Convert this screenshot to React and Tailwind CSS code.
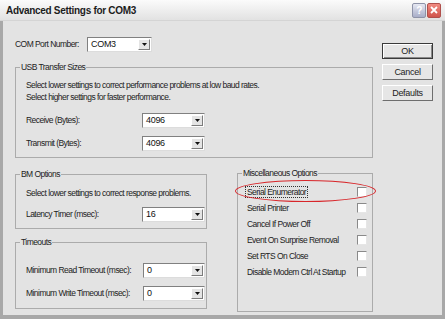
import React from "react";

const Combo = ({ value, className = "" }) => (
  <div
    className={
      "h-[15px] flex items-center justify-between bg-white border border-t-[#808080] border-l-[#808080] border-b-[#dcdcdc] border-r-[#dcdcdc] pl-[3px] pr-[1px] " +
      className
    }
  >
    <span className="text-[9px] leading-none tracking-[-0.3px] text-[#111]">{value}</span>
    <span className="w-[12px] h-[11px] flex items-center justify-center bg-[#e4e4e4] border border-t-white border-l-white border-b-[#7c7c7c] border-r-[#7c7c7c]">
      <svg width="5" height="3" viewBox="0 0 5 3">
        <path d="M0 0H5L2.5 3Z" fill="#111" />
      </svg>
    </span>
  </div>
);

const Group = ({ title, className = "", children }) => (
  <div className={"relative border border-[#ababab] " + className}>
    <span className="absolute left-[4px] -top-[7px] px-[1px] bg-[#e3e3e3] whitespace-nowrap leading-[12px] text-[#222]">
      {title}
    </span>
    {children}
  </div>
);

const Check = () => (
  <span className="w-[10px] h-[10px] bg-white border border-t-[#8a8a8a] border-l-[#8a8a8a] border-b-[#e6e6e6] border-r-[#e6e6e6]" />
);

const Button = ({ label, primary }) => (
  <button
    type="button"
    className={
      "w-[51px] h-[16px] flex items-center justify-center bg-[#e6e6e6] text-[9px] tracking-[-0.3px] leading-none text-[#222] " +
      (primary
        ? "border border-[#3a3a3a] shadow-[inset_1px_1px_0_#fff,inset_-1px_-1px_0_#8a8a8a]"
        : "border border-t-white border-l-white border-b-[#6e6e6e] border-r-[#6e6e6e]")
    }
  >
    {label}
  </button>
);

const Row = ({ label, value, labelW = "w-[116px]", comboW = "w-[63px]" }) => (
  <div className="flex items-center">
    <span className={labelW + " whitespace-nowrap"}>{label}</span>
    <Combo value={value} className={comboW} />
  </div>
);

const misc = [
  "Serial Enumerator",
  "Serial Printer",
  "Cancel If Power Off",
  "Event On Surprise Removal",
  "Set RTS On Close",
  "Disable Modem Ctrl At Startup",
];

export default function App() {
  return (
    <div className="w-[445px] h-[319px] flex flex-col bg-[#e3e3e3] overflow-hidden font-['Liberation_Sans',sans-serif] text-[8.5px] tracking-[-0.55px] text-[#222]">
      {/* title bar */}
      <div className="h-[21px] flex items-center justify-between pl-[6px] pr-[4px] bg-gradient-to-b from-[#fbfbfb] to-[#e2e2e2] border-b border-[#d4d4d4]">
        <span className="font-bold text-[10px] tracking-[-0.3px] text-[#1c1c1c]">
          Advanced Settings for COM3
        </span>
        <div className="flex gap-[1px]">
          <span className="w-[14px] h-[15px] flex items-center justify-center rounded-[2px] border border-[#8e93a8] bg-gradient-to-b from-[#e6e8f2] to-[#a9aec8] text-[10px] font-bold text-white">
            ?
          </span>
          <span className="w-[14px] h-[15px] flex items-center justify-center rounded-[2px] border border-[#b0504c] bg-gradient-to-b from-[#f08a80] to-[#d0544c]">
            <svg width="8" height="8" viewBox="0 0 8 8">
              <path d="M1 1L7 7M7 1L1 7" stroke="#fff" strokeWidth="1.8" />
            </svg>
          </span>
        </div>
      </div>

      {/* body */}
      <div className="flex-1 flex border-l-[3px] border-r-[3px] border-b-[4px] border-[#a8a8a8] pl-[12px] pt-[16px]">
        <div className="w-[358px] flex flex-col">
          <Row label="COM Port Number:" value="COM3" labelW="w-[72px]" comboW="w-[65px]" />

          <Group title="USB Transfer Sizes" className="mt-[15px] h-[91px] pl-[10px] pt-[11px]">
            <p className="leading-[12px]">
              Select lower settings to correct performance problems at low baud rates.
            </p>
            <p className="leading-[12px]">Select higher settings for faster performance.</p>
            <div className="mt-[10px] flex flex-col gap-[8px]">
              <Row label="Receive (Bytes):" value="4096" />
              <Row label="Transmit (Bytes):" value="4096" />
            </div>
          </Group>

          <div className="mt-[16px] flex">
            <div className="w-[192px] flex flex-col">
              <Group title="BM Options" className="h-[55px] pl-[10px] pt-[12px]">
                <p className="leading-[12px]">Select lower settings to correct response problems.</p>
                <div className="mt-[8px]">
                  <Row label="Latency Timer (msec):" value="16" />
                </div>
              </Group>
              <Group title="Timeouts" className="mt-[13px] h-[67px] pl-[10px] pt-[20px]">
                <div className="flex flex-col gap-[8px]">
                  <Row label="Minimum Read Timeout (msec):" value="0" labelW="w-[117px]" comboW="w-[62px]" />
                  <Row label="Minimum Write Timeout (msec):" value="0" labelW="w-[117px]" comboW="w-[62px]" />
                </div>
              </Group>
            </div>

            <Group title="Miscellaneous Options" className="ml-[30px] -mt-[1px] w-[136px] h-[139px] pl-[9px] pr-[5px] pt-[10px]">
              <div className="flex flex-col">
                {misc.map((m, i) => (
                  <div key={m} className="relative h-[16px] flex items-center justify-between">
                    <span
                      className={
                        "whitespace-nowrap leading-[10px] " +
                        (i === 0 ? "outline outline-1 outline-dotted outline-[#333] px-[1px] -ml-[1px]" : "")
                      }
                    >
                      {m}
                    </span>
                    <Check />
                    {i === 0 && (
                      <span className="absolute -left-[12px] -right-[9px] -top-[4px] -bottom-[2px] rounded-[50%] border-[1.5px] border-[#d8262a]" />
                    )}
                  </div>
                ))}
              </div>
            </Group>
          </div>
        </div>

        <div className="ml-[9px] pt-[6px] flex flex-col gap-[5px]">
          <Button label="OK" primary />
          <Button label="Cancel" />
          <Button label="Defaults" />
        </div>
      </div>
    </div>
  );
}
